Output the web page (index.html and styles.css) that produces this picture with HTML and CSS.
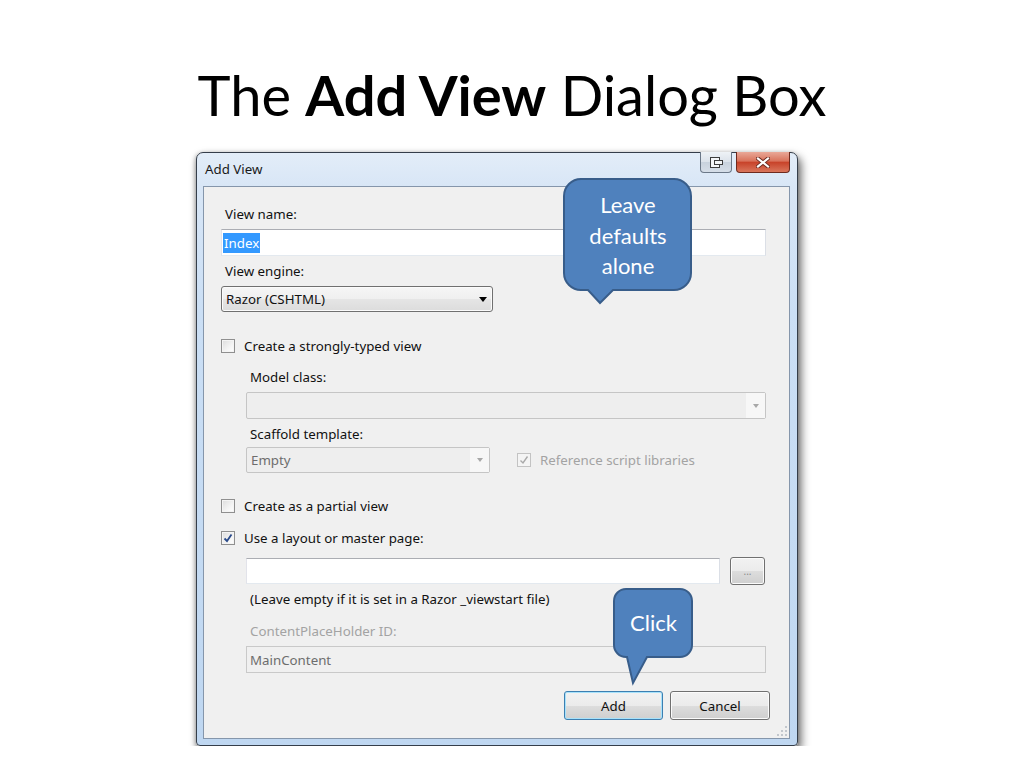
FILE: index.html
```html
<!DOCTYPE html>
<html lang="en">
<head>
    <meta charset="UTF-8">
    <meta name="viewport" content="width=device-width, initial-scale=1.0">
    <title>The Add View Dialog Box</title>
    <link rel="stylesheet" href="styles.css">
</head>
<body>

    <h1 class="slide-title">The <b>Add View</b> Dialog Box</h1>

    <div class="window">
        <div class="titlebar">
            <span class="caption">Add View</span>
            <div class="caption-buttons">
                <span class="cap-btn cap-restore">
                    <svg width="13" height="11" viewBox="0 0 13 11">
                        <rect x="0.5" y="0.5" width="9" height="10" fill="#f4f6f8" stroke="#3d3d3d"/>
                        <rect x="4.5" y="3.5" width="8" height="4" fill="#f4f6f8" stroke="#3d3d3d"/>
                    </svg>
                </span>
                <span class="cap-btn cap-close">
                    <svg width="14" height="11" viewBox="0 0 14 11">
                        <path d="M2,1.5 L12,9.5 M12,1.5 L2,9.5" stroke="#6b2a20" stroke-width="4" stroke-linecap="square"/>
                        <path d="M2,1.5 L12,9.5 M12,1.5 L2,9.5" stroke="#ffffff" stroke-width="2.2" stroke-linecap="square"/>
                    </svg>
                </span>
            </div>
        </div>

        <div class="client">
            <div class="field-label">View name:</div>
            <div class="textbox field-gap"><span class="selected-text">Index</span></div>

            <div class="field-label label-gap">View engine:</div>
            <div class="combo combo-engine field-gap">
                <span>Razor (CSHTML)</span>
                <span class="arrow"></span>
            </div>

            <label class="check-row typed-gap">
                <span class="checkbox"></span>
                Create a strongly-typed view
            </label>

            <div class="indent">
                <div class="field-label label-gap-lg">Model class:</div>
                <div class="combo combo-disabled field-gap">
                    <span></span>
                    <span class="drop-area"><span class="arrow arrow-grey"></span></span>
                </div>

                <div class="field-label label-gap">Scaffold template:</div>
                <div class="scaffold-row">
                    <div class="combo combo-disabled combo-empty">
                        <span class="grey-text">Empty</span>
                        <span class="drop-area"><span class="arrow arrow-grey"></span></span>
                    </div>
                    <label class="check-row check-disabled">
                        <span class="checkbox checkbox-disabled">
                            <svg width="10" height="10" viewBox="0 0 10 10"><path d="M1.5,5.5 L4,8 L8.5,1.5" fill="none" stroke="#a9a9a9" stroke-width="1.4"/></svg>
                        </span>
                        Reference script libraries
                    </label>
                </div>
            </div>

            <label class="check-row section-gap">
                <span class="checkbox"></span>
                Create as a partial view
            </label>

            <label class="check-row check-gap">
                <span class="checkbox">
                    <svg width="10" height="10" viewBox="0 0 10 10"><path d="M1.5,5.5 L4,8 L8.5,1.5" fill="none" stroke="#2a4a8a" stroke-width="1.8"/></svg>
                </span>
                Use a layout or master page:
            </label>

            <div class="indent">
                <div class="layout-row">
                    <div class="textbox layout-input"></div>
                    <button type="button" class="win-btn browse-btn">...</button>
                </div>
                <div class="field-label note">(Leave empty if it is set in a Razor _viewstart file)</div>

                <div class="field-label cph-gap grey-label">ContentPlaceHolder ID:</div>
                <div class="textbox textbox-disabled field-gap">MainContent</div>
            </div>

            <div class="button-row">
                <button type="button" class="win-btn default-btn">Add</button>
                <button type="button" class="win-btn">Cancel</button>
            </div>

            <svg class="grip" width="10" height="10" viewBox="0 0 10 10">
                <rect x="8" y="0" width="2" height="2" fill="#c2c7cd"/>
                <rect x="4" y="4" width="2" height="2" fill="#c2c7cd"/>
                <rect x="8" y="4" width="2" height="2" fill="#c2c7cd"/>
                <rect x="0" y="8" width="2" height="2" fill="#c2c7cd"/>
                <rect x="4" y="8" width="2" height="2" fill="#c2c7cd"/>
                <rect x="8" y="8" width="2" height="2" fill="#c2c7cd"/>
            </svg>
        </div>

        <!-- callouts drawn over the dialog -->
        <div class="callout callout-defaults">
            <svg class="callout-shape" width="130" height="128" viewBox="0 0 130 128">
                <path d="M18,1 H111 A17,17 0 0 1 128,18 V95 A17,17 0 0 1 111,112 H50 L37,125 L25,112 H18 A17,17 0 0 1 1,95 V18 A17,17 0 0 1 18,1 Z" fill="#4f81bd" stroke="#385d8a" stroke-width="2"/>
            </svg>
            <div class="callout-text">Leave<br>defaults<br>alone</div>
        </div>

        <div class="callout callout-click">
            <svg class="callout-shape" width="81" height="98" viewBox="0 0 81 98">
                <path d="M13,1 H67 A12,12 0 0 1 79,13 V57 A12,12 0 0 1 67,69 H34 L20,95 L14,69 H13 A12,12 0 0 1 1,57 V13 A12,12 0 0 1 13,1 Z" fill="#4f81bd" stroke="#385d8a" stroke-width="2"/>
            </svg>
            <div class="callout-text">Click</div>
        </div>
    </div>

</body>
</html>
```

FILE: styles.css
```css
* {
    box-sizing: border-box;
}

body {
    margin: 0;
    background: #fff;
    font-family: "Noto Sans", sans-serif;
}

.slide-title {
    margin: 67px 0 0;
    text-align: center;
    font-family: Lato, sans-serif;
    font-weight: 400;
    font-size: 56px;
    line-height: 56px;
    color: #000;
}

.slide-title b {
    font-weight: 700;
}

/* window frame */
.window {
    position: relative;
    width: 602px;
    height: 594px;
    margin: 29px 0 0 196px;
    padding: 0 7px 6px 6px;
    display: flex;
    flex-direction: column;
    border: 1px solid #353e4a;
    border-radius: 7px 7px 4px 4px;
    background: linear-gradient(to bottom, #e3edf8 0, #d8e6f6 34px, #cbdff5 160px, #bfd7f1 100%);
    box-shadow: 3px 5px 10px rgba(0, 0, 0, 0.6), -1px 1px 4px rgba(0, 0, 0, 0.25);
}

.titlebar {
    display: flex;
    align-items: flex-start;
    height: 33px;
}

.caption {
    margin-left: 2px;
    line-height: 33px;
    font-size: 13.3px;
    color: #1a1a1a;
}

.caption-buttons {
    display: flex;
    gap: 4px;
    margin-left: auto;
    margin-top: -1px;
}

.cap-btn {
    display: flex;
    align-items: center;
    justify-content: center;
    height: 21px;
    border: 1px solid #6b7888;
    border-top: none;
    border-radius: 0 0 4px 4px;
}

.cap-restore {
    width: 32px;
    background: linear-gradient(to bottom, #eef2f6 0, #dbe2ea 50%, #c8d2dd 51%, #d6dee8 100%);
}

.cap-close {
    width: 54px;
    border-color: #6e2a1e;
    background: linear-gradient(to bottom, #e9a898 0, #d9735c 45%, #c8432a 52%, #d9765c 100%);
}

/* client area */
.client {
    position: relative;
    flex: 1;
    padding: 19px 23px 0 17px;
    border: 1px solid #8596ab;
    background: #f0f0f0;
    font-size: 13.3px;
    line-height: 16px;
    color: #111;
}

.field-label {
    height: 16px;
    padding-left: 4px;
}

.label-gap {
    margin-top: 7px;
}

.label-gap-lg {
    margin-top: 15px;
}

.field-gap {
    margin-top: 7px;
}

.typed-gap {
    margin-top: 26px;
}

.section-gap {
    margin-top: 25px;
}

.check-gap {
    margin-top: 16px;
}

.cph-gap {
    margin-top: 16px;
}

.grey-label {
    color: #a3a3a3;
}

.grey-text {
    color: #6d6d6d;
}

.textbox {
    display: flex;
    align-items: center;
    height: 27px;
    padding: 0 1px;
    border: 1px solid;
    border-color: #abadb3 #dbdfe6 #e3e9ef #e2e3ea;
    background: #fff;
}

.selected-text {
    padding: 2px 1px;
    background: #3399ff;
    color: #fff;
}

.textbox-disabled {
    padding: 0 3px;
    border-color: #c9c9c9;
    background: #f0f0f0;
    color: #6d6d6d;
}

.combo {
    display: flex;
    align-items: center;
    justify-content: space-between;
    height: 26px;
    padding-left: 4px;
}

.combo-engine {
    width: 272px;
    padding-right: 5px;
    border: 1px solid #707070;
    border-radius: 3px;
    background: linear-gradient(to bottom, #f6f6f6 0, #efefef 50%, #e5e5e5 51%, #dcdcdc 100%);
    box-shadow: inset 0 0 0 1px #fbfbfb;
}

.arrow {
    width: 0;
    height: 0;
    border-left: 4px solid transparent;
    border-right: 4px solid transparent;
    border-top: 5px solid #000;
}

.arrow-grey {
    border-left-width: 3px;
    border-right-width: 3px;
    border-top: 4px solid #a8a8a8;
}

.combo-disabled {
    height: 27px;
    padding-right: 0;
    border: 1px solid #c5c5c5;
    border-radius: 2px;
    background: #eeeeee;
}

.drop-area {
    display: flex;
    align-items: center;
    justify-content: center;
    align-self: stretch;
    width: 19px;
    background: #f7f7f7;
}

.indent {
    margin-left: 25px;
}

.scaffold-row {
    display: flex;
    align-items: center;
    gap: 27px;
    margin-top: 5px;
}

.combo-empty {
    width: 244px;
    height: 26px;
}

.check-row {
    display: flex;
    align-items: center;
    gap: 9px;
    height: 16px;
}

.check-disabled {
    color: #a3a3a3;
}

.checkbox {
    display: flex;
    align-items: center;
    justify-content: center;
    width: 14px;
    height: 14px;
    border: 1px solid #8f8f8f;
    background: linear-gradient(135deg, #dcdcdc 0, #f4f4f4 60%, #ffffff 100%);
    box-shadow: inset 0 0 0 1px #f4f4f4;
}

.checkbox-disabled {
    border-color: #c3c3c3;
    background: #f4f4f4;
}

.layout-row {
    display: flex;
    align-items: center;
    gap: 10px;
    margin-top: 11px;
}

.layout-input {
    width: 474px;
    height: 26px;
}

.note {
    margin-top: 6px;
    color: #111;
}

.win-btn {
    height: 29px;
    padding: 0;
    border: 1px solid #707070;
    border-radius: 3px;
    background: linear-gradient(to bottom, #f2f2f2 0, #ebebeb 50%, #dddddd 51%, #cfcfcf 100%);
    box-shadow: inset 0 0 0 1px #fbfbfb;
    font-family: "Noto Sans", sans-serif;
    font-size: 13.3px;
    color: #111;
}

.browse-btn {
    width: 35px;
    height: 28px;
    font-size: 10px;
    color: #8a8a8a;
}

.button-row {
    display: flex;
    justify-content: flex-end;
    gap: 7px;
    margin-top: 18px;
    margin-right: -4px;
}

.button-row .win-btn {
    width: 100px;
}

.button-row .default-btn {
    width: 99px;
    border-color: #3c7fb1;
    box-shadow: inset 0 0 0 1px #a8e2fb;
}

.grip {
    position: absolute;
    right: 2px;
    bottom: 2px;
}

/* callouts */
.callout {
    position: absolute;
    color: #fff;
    font-family: Lato, sans-serif;
    font-size: 22px;
    text-align: center;
}

.callout-shape {
    position: absolute;
    left: 0;
    top: 0;
}

.callout-text {
    position: relative;
}

.callout-defaults {
    left: 366px;
    top: 25px;
    width: 130px;
    height: 113px;
    padding-top: 12px;
    line-height: 30.5px;
}

.callout-click {
    left: 416px;
    top: 435px;
    width: 81px;
    height: 70px;
    padding-top: 20px;
    line-height: 30px;
}
```
